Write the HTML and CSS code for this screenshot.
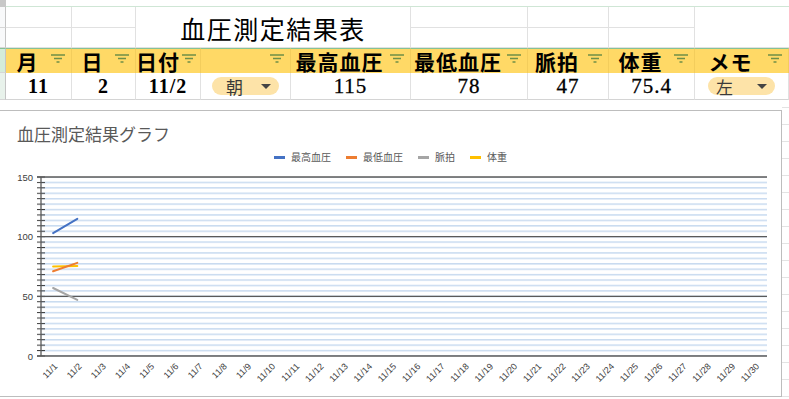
FILE: index.html
```html
<!DOCTYPE html>
<html lang="ja">
<head>
<meta charset="utf-8">
<title>血圧測定結果表</title>
<link rel="stylesheet" href="styles.css">
</head>
<body>
<div class="topstrip"><div class="corner"></div></div>
<div class="sheet">
  <!-- rows 1-2 -->
  <div class="rh r1"></div>
  <div class="c r1 c1"></div>
  <div class="c r1 c2"></div>
  <div class="c title">血圧測定結果表</div>
  <div class="c r1 c6"></div>
  <div class="c r1 c7"></div>
  <div class="c r1 c8"></div>
  <div class="c c9top"></div>
  <div class="rh r2"></div>
  <div class="c r2 c1"></div>
  <div class="c r2 c2"></div>
  <div class="c r2 c6"></div>
  <div class="c r2 c7"></div>
  <div class="c r2 c8"></div>

  <!-- header row -->
  <div class="rh rh-head"></div>
  <div class="hd"><span class="hd-label">月</span><svg class="filter" viewBox="0 0 14 9"><path d="M0 1H14M3 4.5H11M5.5 8H8.5"/></svg></div>
  <div class="hd"><span class="hd-label">日</span><svg class="filter" viewBox="0 0 14 9"><path d="M0 1H14M3 4.5H11M5.5 8H8.5"/></svg></div>
  <div class="hd"><span class="hd-label">日付</span><svg class="filter" viewBox="0 0 14 9"><path d="M0 1H14M3 4.5H11M5.5 8H8.5"/></svg></div>
  <div class="hd"><span class="hd-label"></span><svg class="filter" viewBox="0 0 14 9"><path d="M0 1H14M3 4.5H11M5.5 8H8.5"/></svg></div>
  <div class="hd"><span class="hd-label">最高血圧</span><svg class="filter" viewBox="0 0 14 9"><path d="M0 1H14M3 4.5H11M5.5 8H8.5"/></svg></div>
  <div class="hd"><span class="hd-label">最低血圧</span><svg class="filter" viewBox="0 0 14 9"><path d="M0 1H14M3 4.5H11M5.5 8H8.5"/></svg></div>
  <div class="hd"><span class="hd-label">脈拍</span><svg class="filter" viewBox="0 0 14 9"><path d="M0 1H14M3 4.5H11M5.5 8H8.5"/></svg></div>
  <div class="hd"><span class="hd-label">体重</span><svg class="filter" viewBox="0 0 14 9"><path d="M0 1H14M3 4.5H11M5.5 8H8.5"/></svg></div>
  <div class="hd"><span class="hd-label">メモ</span><svg class="filter" viewBox="0 0 14 9"><path d="M0 1H14M3 4.5H11M5.5 8H8.5"/></svg></div>

  <!-- data row -->
  <div class="rh rh-data"></div>
  <div class="dv b">11</div>
  <div class="dv b">2</div>
  <div class="dv b">11/2</div>
  <div class="dv"><span class="chip chip-am">朝<i class="caret"></i></span></div>
  <div class="dv">115</div>
  <div class="dv">78</div>
  <div class="dv">47</div>
  <div class="dv">75.4</div>
  <div class="dv"><span class="chip chip-memo">左<i class="caret"></i></span></div>
</div>

<div class="lower">
  <section class="chart">
    <h2 class="chart-title">血圧測定結果グラフ</h2>
    <ul class="legend">
      <li><span class="sw sw-blue"></span>最高血圧</li>
      <li><span class="sw sw-orange"></span>最低血圧</li>
      <li><span class="sw sw-gray"></span>脈拍</li>
      <li><span class="sw sw-yellow"></span>体重</li>
    </ul>
    <svg class="plot" width="781" height="232" viewBox="0 163 781 232">
      <defs>
        <pattern id="minor" patternUnits="userSpaceOnUse" x="0" y="176.25" width="781" height="5.4242">
          <rect x="0" y="0" width="781" height="1.5" class="minor-line"/>
        </pattern>
        <pattern id="ticks" patternUnits="userSpaceOnUse" x="37" y="176.5" width="8" height="5.4242">
          <rect x="0" y="0" width="8" height="1" class="tick"/>
        </pattern>
      </defs>
      <rect x="41" y="177" width="726" height="179" fill="url(#minor)"/>
      <rect x="37" y="176" width="8" height="181" fill="url(#ticks)"/>
      <g class="major">
        <line x1="37" y1="177" x2="767" y2="177"/>
        <line x1="37" y1="236.7" x2="767" y2="236.7"/>
        <line x1="37" y1="296.3" x2="767" y2="296.3"/>
        <line x1="37" y1="356" x2="767" y2="356"/>
        <line x1="41" y1="177" x2="41" y2="356"/>
      </g>
      <g class="ylabels">
        <text x="33" y="180.5">150</text>
        <text x="33" y="240.2">100</text>
        <text x="33" y="299.8">50</text>
        <text x="33" y="359.5">0</text>
      </g>
      <g class="series">
        <line class="s-blue" x1="53.1" y1="233.1" x2="77.3" y2="218.8"/>
        <line class="s-gray" x1="53.1" y1="288" x2="77.3" y2="299.9"/>
        <line class="s-yellow" x1="53.1" y1="266.6" x2="77.3" y2="266"/>
        <line class="s-orange" x1="53.1" y1="271.3" x2="77.3" y2="262.9"/>
      </g>
      <g class="xlabels">
        <text transform="translate(58.1,367) rotate(-45)">11/1</text>
        <text transform="translate(82.3,367) rotate(-45)">11/2</text>
        <text transform="translate(106.5,367) rotate(-45)">11/3</text>
        <text transform="translate(130.7,367) rotate(-45)">11/4</text>
        <text transform="translate(154.9,367) rotate(-45)">11/5</text>
        <text transform="translate(179.1,367) rotate(-45)">11/6</text>
        <text transform="translate(203.3,367) rotate(-45)">11/7</text>
        <text transform="translate(227.5,367) rotate(-45)">11/8</text>
        <text transform="translate(251.7,367) rotate(-45)">11/9</text>
        <text transform="translate(275.9,367) rotate(-45)">11/10</text>
        <text transform="translate(300.1,367) rotate(-45)">11/11</text>
        <text transform="translate(324.3,367) rotate(-45)">11/12</text>
        <text transform="translate(348.5,367) rotate(-45)">11/13</text>
        <text transform="translate(372.7,367) rotate(-45)">11/14</text>
        <text transform="translate(396.9,367) rotate(-45)">11/15</text>
        <text transform="translate(421.1,367) rotate(-45)">11/16</text>
        <text transform="translate(445.3,367) rotate(-45)">11/17</text>
        <text transform="translate(469.5,367) rotate(-45)">11/18</text>
        <text transform="translate(493.7,367) rotate(-45)">11/19</text>
        <text transform="translate(517.9,367) rotate(-45)">11/20</text>
        <text transform="translate(542.1,367) rotate(-45)">11/21</text>
        <text transform="translate(566.3,367) rotate(-45)">11/22</text>
        <text transform="translate(590.5,367) rotate(-45)">11/23</text>
        <text transform="translate(614.7,367) rotate(-45)">11/24</text>
        <text transform="translate(638.9,367) rotate(-45)">11/25</text>
        <text transform="translate(663.1,367) rotate(-45)">11/26</text>
        <text transform="translate(687.3,367) rotate(-45)">11/27</text>
        <text transform="translate(711.5,367) rotate(-45)">11/28</text>
        <text transform="translate(735.7,367) rotate(-45)">11/29</text>
        <text transform="translate(759.9,367) rotate(-45)">11/30</text>
      </g>
    </svg>
  </section>
  <div class="gutter"></div>
</div>
</body>
</html>
```
FILE: styles.css
```css
html, body {
  margin: 0;
  padding: 0;
  background: #fff;
}
body {
  width: 789px;
  height: 399px;
  overflow: hidden;
  font-family: "Noto Sans CJK JP", "Noto Sans", sans-serif;
  color: #000;
}

/* ---------- spreadsheet ---------- */
.topstrip {
  height: 6px;
  border-bottom: 1px solid #cfe6d5;
}
.corner {
  width: 6px;
  height: 7px;
  background: #c8c8c8;
}

.sheet {
  display: grid;
  grid-template-columns: 6px 66px 64px 65px 90px 120px 117px 81px 86px 94px;
  grid-template-rows: 21px 20px 25px 27px;
}
.sheet > div {
  box-sizing: border-box;
}
.c {
  border-right: 1px solid #e1e1e1;
  border-bottom: 1px solid #e1e1e1;
}
.rh {
  border-right: 1px solid #c4c4c4;
  border-bottom: 1px solid #d6d6d6;
  background: #f8f9fa;
}
.rh.r1 { grid-row: 1; grid-column: 1; }
.rh.r2 { grid-row: 2; grid-column: 1; }
.r1 { grid-row: 1; }
.r2 { grid-row: 2; }
.c1 { grid-column: 2; }
.c2 { grid-column: 3; }
.c6 { grid-column: 7; }
.c7 { grid-column: 8; }
.c8 { grid-column: 9; }
.c9top { grid-column: 10; grid-row: 1 / 3; border-right: none; }

.title {
  grid-column: 4 / 7;
  grid-row: 1 / 3;
  display: flex;
  align-items: center;
  justify-content: center;
  font-size: 25px;
  letter-spacing: 1.5px;
  font-weight: 400;
  padding-top: 1px;
}

.rh-head {
  background: #d4ecd9;
  border-top: 1px solid #86c295;
}
.rh-data {
  background: #e8f2eb;
}

.hd {
  display: flex;
  align-items: center;
  background: #ffd966;
  border-top: 1px solid #86c295;
  border-right: 1px solid #f3cd5c;
  font-size: 21px;
  font-weight: 700;
  line-height: 1;
}
.hd-label {
  flex: 1;
  text-align: center;
  letter-spacing: 1px;
  white-space: nowrap;
}
.filter {
  flex: none;
  width: 14px;
  height: 9px;
  margin: 0 6px 5px 2px;
  fill: none;
  stroke: #6f8f47;
  stroke-width: 1.3;
}

.dv {
  display: flex;
  align-items: center;
  justify-content: center;
  border-right: 1px solid #e1e1e1;
  border-bottom: 1px solid #d4d4d4;
  font-family: "Liberation Serif", serif;
  font-size: 21px;
  font-weight: 400;
  letter-spacing: 1px;
  -webkit-text-stroke: 0.3px #000;
}
.dv.b {
  font-size: 20px;
  font-weight: 700;
  -webkit-text-stroke: 0;
}

.chip {
  display: inline-flex;
  align-items: center;
  justify-content: space-between;
  box-sizing: border-box;
  width: 67px;
  height: 18px;
  border-radius: 9px;
  background: #fde3a8;
  font-family: "Noto Sans CJK JP", sans-serif;
  font-size: 17px;
  font-weight: 400;
  letter-spacing: 0;
  -webkit-text-stroke: 0;
  color: #3a3a3a;
  padding-right: 8px;
}
.chip-am { padding-left: 14px; }
.chip-memo { padding-left: 8px; }
.caret {
  width: 0;
  height: 0;
  border-left: 5px solid transparent;
  border-right: 5px solid transparent;
  border-top: 5px solid #444;
}

/* ---------- chart ---------- */
.lower {
  display: flex;
  height: 299px;
}
.chart {
  flex: none;
  width: 782px;
  height: 287px;
  margin-top: 10px;
  box-sizing: border-box;
  background: #fff;
  border-top: 1px solid #bdbdbd;
  border-right: 1px solid #bdbdbd;
  border-bottom: 1px solid #bdbdbd;
}
.gutter {
  flex: 1;
  background: repeating-linear-gradient(to bottom, transparent 0 7px, #e3e3e3 7px 8px, transparent 8px 17px);
}
.chart-title {
  margin: 0;
  padding: 13px 0 0 17px;
  font-size: 17px;
  line-height: 20px;
  font-weight: 400;
  color: #595959;
}
.legend {
  list-style: none;
  margin: 7px 0 0;
  padding: 0;
  display: flex;
  justify-content: center;
  gap: 15px;
  font-size: 10px;
  line-height: 12px;
  color: #595959;
}
.legend li {
  display: flex;
  align-items: center;
  gap: 6px;
}
.sw {
  width: 11px;
  height: 3px;
}
.sw-blue { background: #4472c4; }
.sw-orange { background: #ed7d31; }
.sw-gray { background: #a5a5a5; }
.sw-yellow { background: #ffc000; }

.plot {
  display: block;
}
.minor-line { fill: #c9dbf0; }
.tick { fill: #3a3a3a; }
.major line {
  stroke: #5a5a5a;
  stroke-width: 1.3;
}
.ylabels text {
  font-family: "Liberation Sans", sans-serif;
  font-size: 9.5px;
  fill: #404040;
  text-anchor: end;
}
.xlabels text {
  font-family: "Liberation Sans", sans-serif;
  font-size: 9px;
  fill: #404040;
  text-anchor: end;
}
.series line {
  stroke-width: 2;
  stroke-linecap: round;
}
.s-blue { stroke: #4472c4; }
.s-orange { stroke: #ed7d31; }
.s-gray { stroke: #a5a5a5; }
.s-yellow { stroke: #ffc000; }
```
